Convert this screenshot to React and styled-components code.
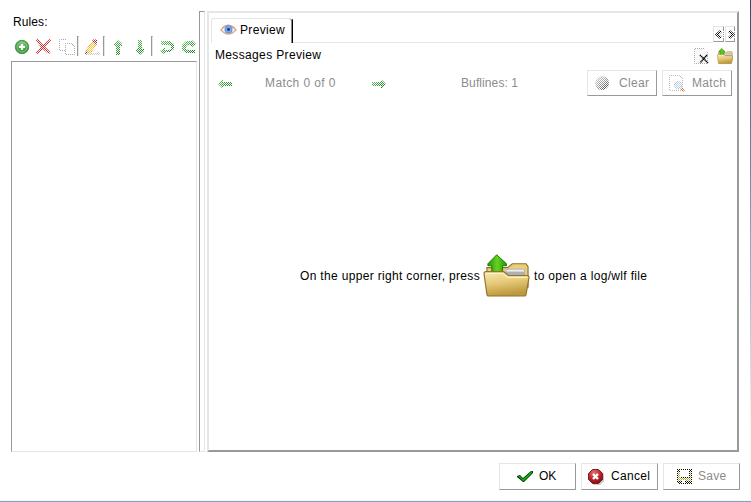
import React from "react";
import styled, { createGlobalStyle } from "styled-components";

const GlobalStyle = createGlobalStyle`
  *, *::before, *::after { box-sizing: border-box; }
  body { margin: 0; background: #fff; font-family: "Liberation Sans", Arial, sans-serif; font-size: 12px; line-height: 14px; color: #000; }
  svg { display: block; flex: none; overflow: visible; }
`;

const light = "#e6e6e6";
const dark = "#999";

const Window = styled.div`
  width: 751px;
  height: 502px;
  display: grid;
  grid-template: 1fr 2px / 1fr 1px;
  background: #fff;
  overflow: hidden;
`;
const Dialog = styled.main`
  display: flex;
  flex-direction: column;
  padding: 11px 10px 0 11px;
`;
const RightEdge = styled.div`
  background: linear-gradient(#304c70, #6c8db0 35%, #a9bfd4 60%, #fff8ea 85%);
`;
const BottomEdge = styled.div`
  grid-column: 1 / -1;
  border-top: 1px solid #fdf4e8;
  background: #7fa3c9;
`;
const Panes = styled.div`
  display: flex;
  height: 441px;
`;
const RulesPane = styled.section`
  width: 186px;
  display: flex;
  flex-direction: column;
`;
const Label = styled.span`
  white-space: pre;
  flex: none;
  letter-spacing: ${(p) => p.$spacing || 0}px;
  color: ${(p) => (p.$muted ? "#8c8c8c" : "#000")};
  width: ${(p) => (p.$width ? `${p.$width}px` : "auto")};
  padding-bottom: ${(p) => p.$lift || 0}px;
`;
const RulesTitle = styled.header`
  height: 25px;
  padding: 4px 0 0 2px;
`;
const Toolbar = styled.div`
  display: flex;
  height: 25px;
  padding-left: 2px;
`;
const Tool = styled.div`
  width: ${(p) => p.$width || 22}px;
  flex: none;
  padding-top: 3px;
`;
const Separator = styled.div`
  width: 2px;
  height: 20px;
  flex: none;
  margin-right: ${(p) => p.$gap || 5}px;
  border-left: 1px solid ${dark};
  border-top: 1px solid ${dark};
  border-right: 1px solid ${light};
`;
const Sunken = styled.div`
  flex: ${(p) => (p.$width ? "none" : "1")};
  width: ${(p) => (p.$width ? `${p.$width}px` : "auto")};
  margin: 0 ${(p) => (p.$width ? 2 : 0)}px;
  border: 1px solid;
  border-color: ${dark} ${light} ${light} ${dark};
`;
const PreviewPane = styled.section`
  width: 532px;
  display: flex;
  flex-direction: column;
  border: 2px solid;
  border-color: ${light} ${dark} ${dark} ${light};
`;
const TabBar = styled.div`
  height: 30px;
  display: flex;
  padding: 5px 0 0 2px;
`;
const Tab = styled.div`
  width: 82px;
  height: 25px;
  display: flex;
  align-items: flex-start;
  padding: 5px 0 0 8px;
  gap: 3px;
  border: solid;
  border-width: 1px 1px 0 1px;
  border-color: ${light} #000 #fff ${light};
  border-radius: 3px 3px 0 0;
  box-shadow: inset -1px 0 #888;
`;
const TabText = styled.div`
  margin-top: -1px;
`;
const TabRail = styled.div`
  flex: 1;
  border-bottom: 1px solid ${light};
`;
const Scrollers = styled.div`
  display: flex;
  gap: 1px;
  padding: 8px 2px 0 0;
`;
const Raised = styled.button`
  width: ${(p) => p.$width}px;
  height: ${(p) => p.$height}px;
  flex: none;
  display: flex;
  align-items: center;
  padding: 0 0 0 ${(p) => p.$pad || 0}px;
  gap: ${(p) => p.$gap || 0}px;
  background: #fff;
  border: 1px solid;
  border-color: ${light} ${dark} ${dark} ${light};
  font: inherit;
`;
const Heading = styled.div`
  height: 25px;
  display: flex;
  align-items: center;
  justify-content: space-between;
  padding: 0 4px 0 6px;
`;
const HeadingIcons = styled.div`
  display: flex;
  gap: 7px;
`;
const MatchBar = styled.div`
  height: 31px;
  display: flex;
  align-items: center;
  padding: 0 5px 2px 9px;
`;
const Counter = styled.div`
  width: ${(p) => p.$width}px;
  padding-top: 2px;
  flex: none;
`;
const MatchButtons = styled.div`
  display: flex;
  gap: 5px;
  margin-left: auto;
`;
const Hint = styled.div`
  flex: 1;
  display: flex;
  align-items: center;
  padding: 2px 0 0 91px;
`;
const HintFolder = styled.div`
  margin: -1px 4px 0 3px;
`;
const Footer = styled.footer`
  display: flex;
  justify-content: flex-end;
  gap: 5px;
  padding-top: 11px;
`;

const SharedDefs = () => (
  <svg width="0" height="0" aria-hidden="true">
    <defs>
      <pattern id="checker-a" width="2" height="2" patternUnits="userSpaceOnUse">
        <path d="M1 0h1v1H1zM0 1h1v1H0z" fill="#fff" shapeRendering="crispEdges" />
      </pattern>
      <pattern id="checker-b" width="2" height="2" patternUnits="userSpaceOnUse">
        <path d="M0 0h1v1H0zM1 1h1v1H1z" fill="#fff" shapeRendering="crispEdges" />
      </pattern>
      <linearGradient id="leaf" x2="1" y2="1">
        <stop stopColor="#6cd064" />
        <stop offset="1" stopColor="#087010" />
      </linearGradient>
      <linearGradient id="gold" x2=".25" y2="1">
        <stop stopColor="#f8eab4" />
        <stop offset=".5" stopColor="#e6ca78" />
        <stop offset="1" stopColor="#bd983e" />
      </linearGradient>
      <radialGradient id="green" cy=".3">
        <stop stopColor="#8ccb7e" />
        <stop offset="1" stopColor="#389638" />
      </radialGradient>
      <radialGradient id="red" cx=".4" cy=".25" r=".8">
        <stop stopColor="#e57575" />
        <stop offset=".6" stopColor="#ba2027" />
        <stop offset="1" stopColor="#780e14" />
      </radialGradient>
      <linearGradient id="sphere" x2="1" y2="1">
        <stop stopColor="#ddd" />
        <stop offset=".45" stopColor="#aaa" />
        <stop offset="1" stopColor="#222" />
      </linearGradient>
      <linearGradient id="lift" x2="1" y2="0">
        <stop stopColor="#2b930d" />
        <stop offset=".5" stopColor="#65d31e" />
        <stop offset="1" stopColor="#259209" />
      </linearGradient>
    </defs>
  </svg>
);

// Disabled icons are stippled with a white checkerboard; `faded` names its phase.
const Icon = ({ w = 16, h = 16, faded, children }) => (
  <svg width={w} height={h} viewBox={`0 0 ${w} ${h}`} fill="none">
    {children}
    {faded && <rect width={w} height={h} fill={`url(#checker-${faded})`} />}
  </svg>
);

const AddIcon = () => (
  <Icon>
    <circle cx="9" cy="8" r="6.7" fill="url(#green)" stroke="#48994a" />
    <circle cx="9" cy="8" r="5" stroke="#9bd392" strokeWidth=".8" />
    <path d="M9 5v6M6 8h6" stroke="#fff" strokeWidth="2.2" />
  </Icon>
);
const DeleteIcon = () => (
  <Icon w={18} faded="a">
    <path d="M1 1l2-1 5 6 7-6 1 1-6 7 5 5-1 2-6-5-5 5-2-1 5-6z" fill="#e32222" stroke="#e32222" strokeWidth=".6" />
  </Icon>
);
const CopyIcon = () => (
  <Icon w={18} h={17} faded="b">
    <path d="M1.500 .5h7l3 3v8h-10z" fill="#fff" stroke="#aaa" />
    <path d="M7.500 4.500h6l3 3v8h-9z" fill="#fff" stroke="#aaa" />
  </Icon>
);
const EditIcon = () => (
  <Icon faded="b">
    <path d="M1 15l2-5 6-8 4 3-6 8z" fill="#ffc629" stroke="#dd961b" />
    <path d="M8 2l2-2 3 1v3l-1 1z" fill="#b51734" />
    <path d="M1 15l1-3 2 1z" fill="#333" />
    <path d="M2 15h13l-2-2" stroke="#bbb" strokeWidth="1.500" />
  </Icon>
);
const VerticalArrow = ({ down }) => (
  <Icon faded="a">
    <path d={down ? "M7 1h4v9h2v2l-4 4-4-4v-2h2z" : "M9 1l4 4v2h-2v9H7V7H5V5z"} fill="url(#leaf)" />
  </Icon>
);
const ApplyIcon = () => (
  <Icon faded="a">
    <path d="M2 2h9l4 3v5l-4 3H6v2H5l-4-3 4-3h1v2h4l2-1V7l-2-1H2z" fill="url(#leaf)" />
  </Icon>
);
const RevertIcon = () => (
  <Icon faded="a">
    <path d="M5 2h5v-1h1l4 4-4 3h-1V6H7L5 8v2l2 1h7v3H5l-4-3V6z" fill="url(#leaf)" />
  </Icon>
);
const HorizontalArrow = ({ right }) => (
  <Icon w={16} h={8} faded={right ? "b" : "a"}>
    <path d={right ? "M1 2h9V0h1l4 4-4 4h-1V6H1z" : "M14 2H5V0H4L0 4l4 4h1V6h9z"} fill="url(#leaf)" />
  </Icon>
);
const EyeIcon = () => (
  <Icon w={17} h={12}>
    <path d="M1 6Q8 -3 16 6Q8 14 1 6z" fill="#f7f7f7" stroke="#dfaa90" strokeWidth="1.500" />
    <path d="M2 4Q8 -2 15 4" stroke="#c8a08c" />
    <circle cx="8.500" cy="5.500" r="4" fill="#6c98e4" />
    <circle cx="8.500" cy="5.500" r="2.600" fill="#79a9f2" />
    <circle cx="8.500" cy="5.500" r="1.400" fill="#16366e" />
  </Icon>
);
const Chevron = ({ right }) => (
  <Icon w={8} h={9} faded="b">
    <path d={right ? "M2 1l4 3.500-4 3.500" : "M5 1L1 4.500 5 8"} stroke="#000" strokeWidth="2.600" />
  </Icon>
);
const ClearLogIcon = () => (
  <Icon w={17}>
    <path d="M1.500 .5h10l3 3v12h-13z" fill="#f2f2f2" stroke="#aaa" />
    <rect width="16" height="16" fill="url(#checker-a)" />
    <path d="M7 7l8 8M14 7l-7 8" stroke="#000" strokeWidth="1.600" strokeDasharray="1.200 .5" />
  </Icon>
);
const Folder = ({ w, h }) => (
  <svg width={w} height={h} viewBox="0 0 48 44" preserveAspectRatio="none">
    <path d="M25 14l5-4h14l2 3v21H4V14h20z" fill="#e9ce77" stroke="#8e7232" strokeWidth="1.200" />
    <path d="M24 15h19v10H20z" fill="#aeb0b8" />
    <path d="M24 16h18v2H24z" fill="#eeeef2" />
    <path d="M14 .8L24 10v2h-4v10H9V12H5v-2z" fill="url(#lift)" stroke="#1d7508" />
    <path d="M1 20q0-2 2-2h18l5 4h19q2 0 2 2l-3 17q0 2-2 2H6q-2 0-2-2z" fill="url(#gold)" stroke="#94732c" strokeWidth="1.200" />
    <path d="M3 20h17l5 4h20" fill="none" stroke="#fff5cc" />
  </svg>
);
const SphereIcon = () => (
  <Icon faded="b">
    <circle cx="8" cy="8" r="7" fill="url(#sphere)" />
  </Icon>
);
const FindIcon = () => (
  <Icon faded="b">
    <path d="M1.500 .5h10l3 3v12h-13z" stroke="#bbb" />
    <circle cx="10" cy="10" r="3.500" fill="#b9d8f6" stroke="#a0b9d5" />
    <path d="M13 13l3 3" stroke="#c75b22" strokeWidth="2" />
  </Icon>
);
const OkIcon = () => (
  <Icon w={16} h={13}>
    <path d="M0 6l3-1 3 3 8-7h2v2l-9 9H6L0 7z" fill="#063006" />
    <path d="M1 6h2l3 3 9-8v2L7 11H6z" fill="#12ac13" />
  </Icon>
);
const CancelIcon = () => (
  <Icon>
    <path d="M6 1h6l4 4v7l-4 4H6l-4-4V5z" fill="#777" opacity=".4" />
    <path d="M4.500 .5h6L14.500 4.500v6l-4 4h-6l-4-4v-6z" fill="url(#red)" stroke="#772024" />
    <path d="M5 5l5 5M10 5l-5 5" stroke="#fff" strokeWidth="2.400" />
  </Icon>
);
const SaveIcon = () => (
  <Icon w={15} h={15} faded="a">
    <path d="M0 0h15v15H2l-2-2z" fill="#090900" />
    <path d="M1 3h2v6h10V3h1v9H1z" fill="#b9ac38" />
    <path d="M3 1h9v7H3zM5 11h3v3H5z" fill="#fff" />
  </Icon>
);

export default function App() {
  return (
    <>
      <GlobalStyle />
      <Window>
        <Dialog>
          <Panes>
            <RulesPane>
              <RulesTitle><Label $spacing={0.1}>Rules:</Label></RulesTitle>
              <Toolbar>
                <Tool><AddIcon /></Tool>
                <Tool $width={23}><DeleteIcon /></Tool>
                <Tool $width={19}><CopyIcon /></Tool>
                <Separator />
                <Tool $width={19}><EditIcon /></Tool>
                <Separator $gap={4} />
                <Tool><VerticalArrow /></Tool>
                <Tool $width={20}><VerticalArrow down /></Tool>
                <Separator $gap={6} />
                <Tool><ApplyIcon /></Tool>
                <Tool $width={16}><RevertIcon /></Tool>
              </Toolbar>
              <Sunken />
            </RulesPane>
            <Sunken $width={6} />
            <PreviewPane>
              <TabBar>
                <Tab><EyeIcon /><TabText><Label $spacing={0.35}>Preview</Label></TabText></Tab>
                <TabRail />
                <Scrollers>
                  <Raised $width={11} $height={16} $pad={2}><Chevron /></Raised>
                  <Raised $width={10} $height={16} $pad={1}><Chevron right /></Raised>
                </Scrollers>
              </TabBar>
              <Heading>
                <Label $spacing={0.35} $lift={2}>Messages Preview</Label>
                <HeadingIcons><ClearLogIcon /><Folder w={16} h={16} /></HeadingIcons>
              </Heading>
              <MatchBar>
                <Counter $width={47}><HorizontalArrow /></Counter>
                <Label $muted $spacing={0.4} $width={106}>Match 0 of 0</Label>
                <Counter $width={90}><HorizontalArrow right /></Counter>
                <Label $muted $spacing={0.1}>Buflines: 1</Label>
                <MatchButtons>
                  <Raised $width={70} $height={26} $pad={6} $gap={9}><SphereIcon /><Label $muted $spacing={0.3}>Clear</Label></Raised>
                  <Raised $width={70} $height={26} $pad={5} $gap={8}><FindIcon /><Label $muted $spacing={0.3}>Match</Label></Raised>
                </MatchButtons>
              </MatchBar>
              <Hint>
                <Label $spacing={0.33} $width={180}>On the upper right corner, press</Label>
                <HintFolder><Folder w={47} h={43} /></HintFolder>
                <Label $spacing={0.33}>to open a log/wlf file</Label>
              </Hint>
            </PreviewPane>
          </Panes>
          <Footer>
            <Raised $width={77} $height={27} $pad={17} $gap={6}><OkIcon /><Label $lift={1}>OK</Label></Raised>
            <Raised $width={77} $height={27} $pad={6} $gap={7}><CancelIcon /><Label $spacing={0.3} $lift={1}>Cancel</Label></Raised>
            <Raised $width={77} $height={27} $pad={13} $gap={6}><SaveIcon /><Label $muted $spacing={0.3} $lift={1}>Save</Label></Raised>
          </Footer>
        </Dialog>
        <RightEdge />
        <BottomEdge />
      </Window>
      <SharedDefs />
    </>
  );
}
